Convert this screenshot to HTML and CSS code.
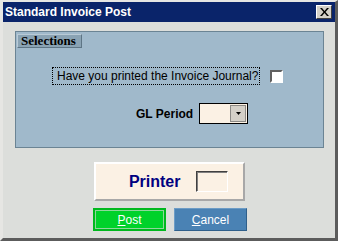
FILE: index.html
```html
<!DOCTYPE html>
<html lang="en">
<head>
    <meta charset="UTF-8">
    <title>Standard Invoice Post</title>
    <link rel="stylesheet" href="styles.css">
</head>
<body>
    <div class="window">
        <div class="title-bar">
            <span class="title">Standard Invoice Post</span>
            <button class="close-btn" type="button">
                <svg width="9" height="8" viewBox="0 0 9 8">
                    <path d="M0 0h2l2.5 3 2.5-3h2L5.5 4 9 8H7L4.5 5 2 8H0l3.5-4z" fill="#000"/>
                </svg>
            </button>
        </div>

        <div class="selections">
            <div class="tab">Selections</div>
            <div class="question-row">
                <label class="question">Have you printed the Invoice Journal?</label>
                <span class="checkbox"></span>
            </div>
            <div class="period-row">
                <span class="period-label">GL Period</span>
                <div class="combo">
                    <span class="combo-arrow">
                        <svg width="5" height="3" viewBox="0 0 5 3"><path d="M0 0h5L2.5 3z" fill="#000"/></svg>
                    </span>
                </div>
            </div>
        </div>

        <div class="printer-box">
            <span class="printer-label">Printer</span>
            <span class="printer-field"></span>
        </div>

        <div class="buttons">
            <button class="btn btn-post" type="button"><u>P</u>ost</button>
            <button class="btn btn-cancel" type="button"><u>C</u>ancel</button>
        </div>
    </div>
</body>
</html>
```

FILE: styles.css
```css
body {
    margin: 0;
    font-family: "Liberation Sans", Arial, sans-serif;
}
.window {
    width: 338px;
    height: 241px;
    box-sizing: border-box;
    background-color: #dcdedb;
    border-top: 2px solid #e6e6e3;
    border-left: 3px solid #e6e6e3;
    border-right: 3px solid #5c5c5c;
    border-bottom: 3px solid #5c5c5c;
    display: flex;
    flex-direction: column;
    align-items: center;
}
.title-bar {
    align-self: stretch;
    height: 20px;
    background-color: #0a246a;
    display: flex;
    align-items: center;
    justify-content: space-between;
    padding: 0 3px 0 2px;
}
.title {
    color: #ffffff;
    font-family: "Liberation Sans", Arial, sans-serif;
    font-weight: bold;
    font-size: 12px;
}
.close-btn {
    width: 16px;
    height: 14px;
    padding: 0;
    background-color: #d4d0c8;
    border: 1px solid;
    border-color: #ffffff #404040 #404040 #ffffff;
    display: flex;
    align-items: center;
    justify-content: center;
}
.selections {
    align-self: flex-start;
    margin: 9px 0 0 12px;
    width: 309px;
    height: 117px;
    box-sizing: border-box;
    background-color: #a0b9cb;
    border: 1px solid #6b8494;
    padding: 2px 0 0 1px;
}
.tab {
    width: 65px;
    height: 14px;
    box-sizing: border-box;
    background-color: #8aa3b4;
    border: 1px solid;
    border-color: #b9cad6 #5e7585 #5e7585 #b9cad6;
    font-family: "Liberation Serif", "Times New Roman", serif;
    font-weight: bold;
    font-size: 13px;
    line-height: 12px;
    padding-left: 3px;
    color: #000000;
}
.question-row {
    display: flex;
    align-items: center;
    margin: 19px 0 0 35px;
}
.question {
    border: 1px dotted #000000;
    padding: 0 1px 0 4px;
    height: 18px;
    box-sizing: border-box;
    line-height: 16px;
    font-size: 12px;
    color: #000000;
}
.checkbox {
    width: 13px;
    height: 13px;
    box-sizing: border-box;
    margin-left: 10px;
    background-color: #ffffff;
    border: 2px solid;
    border-color: #606060 #ffffff #ffffff #606060;
}
.period-row {
    display: flex;
    align-items: center;
    margin: 18px 0 0 119px;
}
.period-label {
    font-weight: bold;
    font-size: 12px;
    color: #000000;
    width: 63px;
}
.combo {
    width: 49px;
    height: 21px;
    box-sizing: border-box;
    background-color: #fbf1e4;
    border: 1px solid #000000;
    display: flex;
    justify-content: flex-end;
    align-items: center;
    padding-right: 1px;
}
.combo-arrow {
    width: 16px;
    height: 17px;
    box-sizing: border-box;
    background-color: #d4d0c8;
    border: 1px solid #8c8a86;
    display: flex;
    align-items: center;
    justify-content: center;
}
.printer-box {
    margin-top: 14px;
    width: 151px;
    height: 39px;
    box-sizing: border-box;
    background-color: #fbf1e4;
    border: 2px solid;
    border-color: #ffffff #a8a8a8 #a8a8a8 #ffffff;
    display: flex;
    align-items: center;
    justify-content: flex-end;
    padding-right: 15px;
}
.printer-label {
    color: #000080;
    font-weight: bold;
    font-size: 16px;
    margin-right: 15px;
}
.printer-field {
    width: 32px;
    height: 21px;
    box-sizing: border-box;
    border: 1px solid;
    border-color: #404040 #ffffff #ffffff #404040;
    box-shadow: inset 1px 1px 0 #808080;
}
.buttons {
    display: flex;
    gap: 8px;
    margin-top: 7px;
    margin-left: 2px;
}
.btn {
    width: 73px;
    height: 23px;
    box-sizing: border-box;
    color: #ffffff;
    font-family: "Liberation Sans", Arial, sans-serif;
    font-size: 12px;
    padding: 0;
}
.btn-post {
    background-color: #00d22a;
    border: 2px solid #00b81e;
    box-shadow: inset 0 0 0 1px #8fd79c;
}
.btn-cancel {
    background-color: #4a82b4;
    border: 1px solid;
    border-color: #6c9cc6 #2f5f8a #2f5f8a #6c9cc6;
}
```
